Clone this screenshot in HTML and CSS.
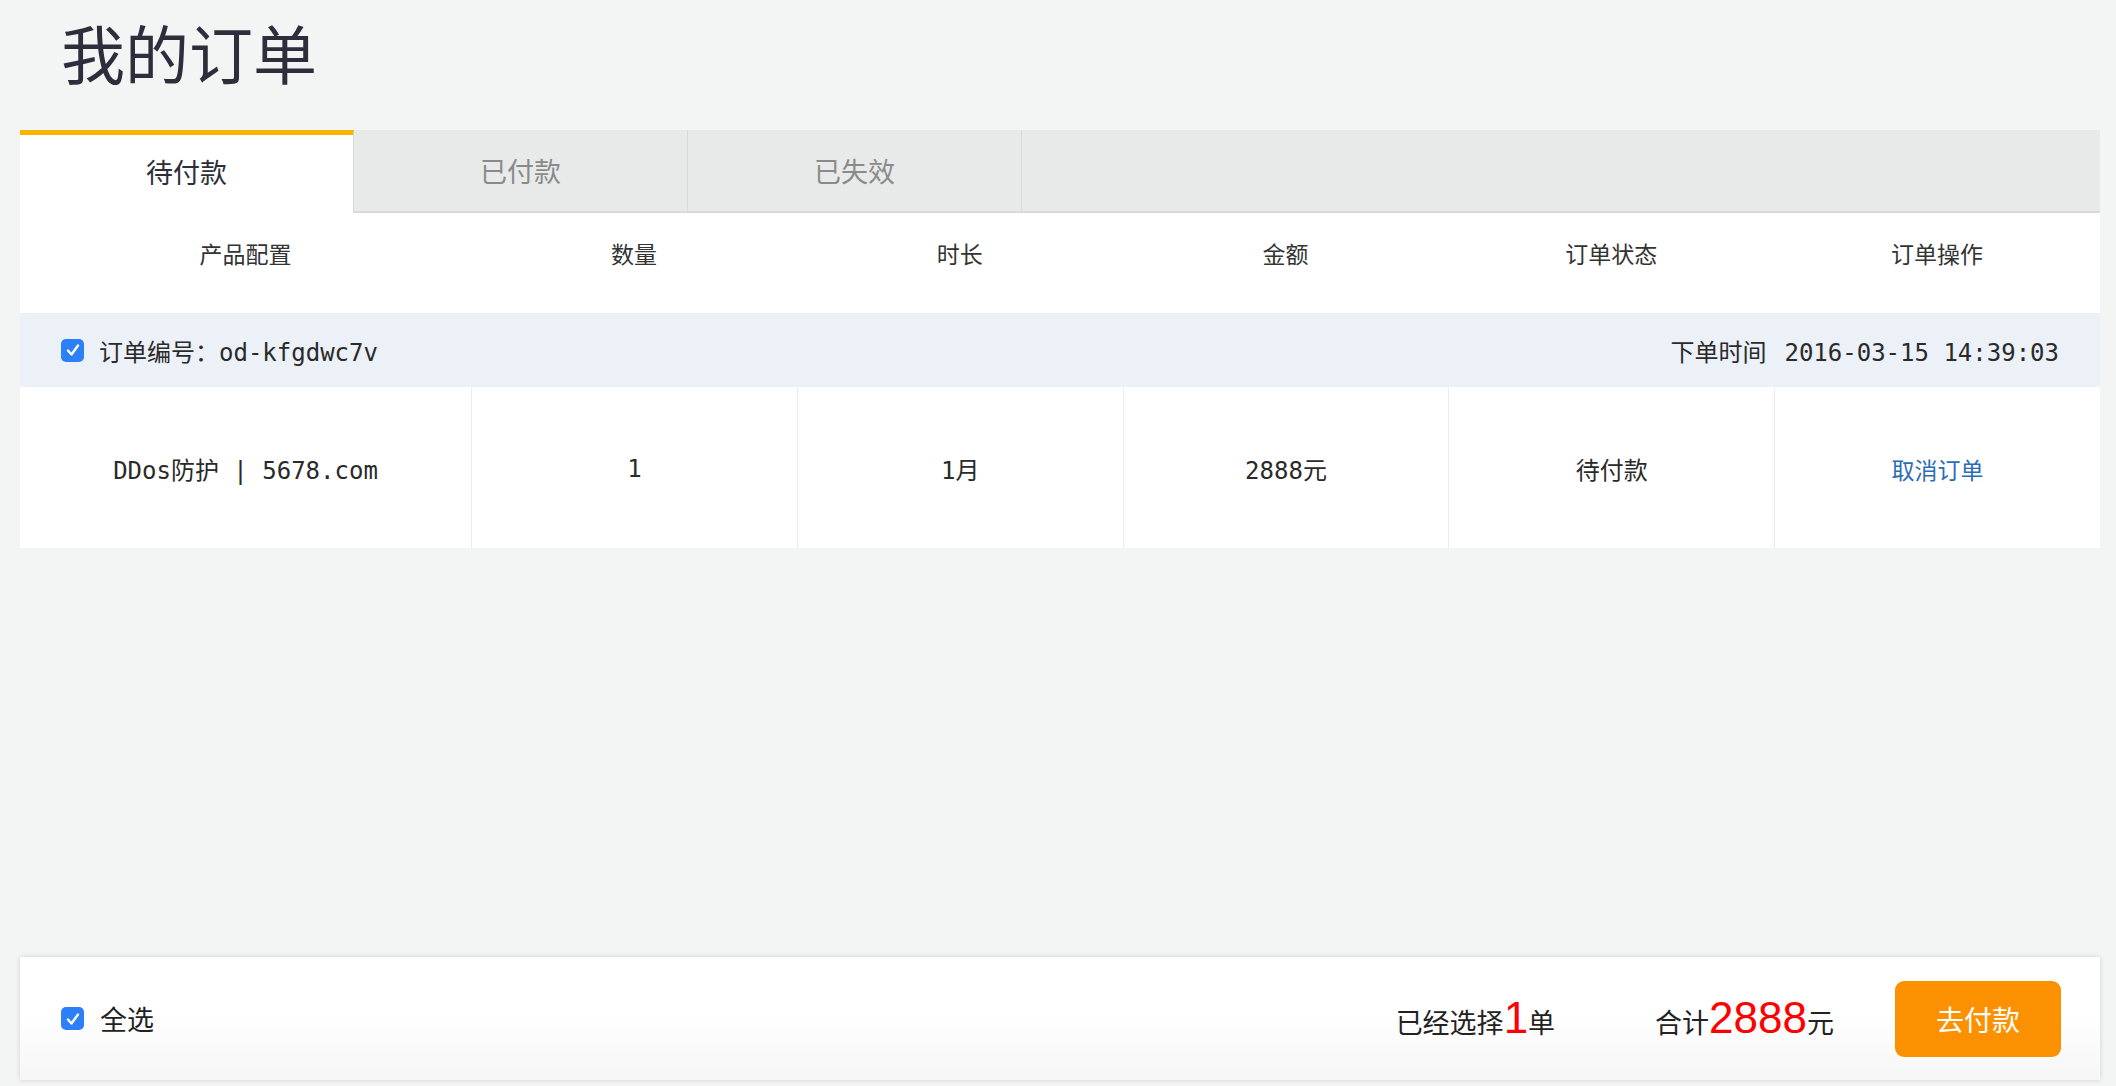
FILE: index.html
```html
<!DOCTYPE html>
<html lang="zh-CN">
<head>
<meta charset="utf-8">
<title>我的订单</title>
<link rel="stylesheet" href="styles.css">
</head>
<body>
<div class="page">
  <h1 class="title">我的订单</h1>

  <div class="tabs">
    <div class="tab active">待付款</div>
    <div class="tab">已付款</div>
    <div class="tab">已失效</div>
    <div class="tab-fill"></div>
  </div>

  <div class="table">
    <div class="thead">
      <div class="th">产品配置</div>
      <div class="th">数量</div>
      <div class="th">时长</div>
      <div class="th">金额</div>
      <div class="th">订单状态</div>
      <div class="th">订单操作</div>
    </div>

    <div class="order-info">
      <div class="order-no">
        <span class="check"><svg viewBox="0 0 22 22" width="22" height="22"><path d="M6 11.5 L9.5 15.5 L16 6.5" fill="none" stroke="#fff" stroke-width="2.4" stroke-linecap="round" stroke-linejoin="round"/></svg></span>
        <span>订单编号：od-kfgdwc7v</span>
      </div>
      <div class="order-time"><span class="label">下单时间</span>2016-03-15 14:39:03</div>
    </div>

    <div class="row">
      <div class="td">DDos防护 | 5678.com</div>
      <div class="td">1</div>
      <div class="td">1月</div>
      <div class="td">2888元</div>
      <div class="td">待付款</div>
      <div class="td"><a class="link" href="#">取消订单</a></div>
    </div>
  </div>

  <div class="footer">
    <div class="select-all">
      <span class="check"><svg viewBox="0 0 22 22" width="22" height="22"><path d="M6 11.5 L9.5 15.5 L16 6.5" fill="none" stroke="#fff" stroke-width="2.4" stroke-linecap="round" stroke-linejoin="round"/></svg></span>
      <span>全选</span>
    </div>
    <div class="summary">
      <div class="count">已经选择<span class="red count-num">1</span>单</div>
      <div class="total">合计<span class="red total-num">2888</span>元</div>
      <button class="pay">去付款</button>
    </div>
  </div>
</div>
</body>
</html>
```

FILE: styles.css
```css
* { box-sizing: border-box; }

html, body {
  margin: 0;
  padding: 0;
}

body {
  background: #f3f5f4;
  color: #333;
  font-family: "Noto Sans CJK SC", "Noto Sans", sans-serif;
}

.page {
  display: flex;
  flex-direction: column;
  min-height: 100vh;
  padding: 0 16px 6px 20px;
}

.title {
  margin: 0;
  padding: 6px 0 0 41px;
  height: 130px;
  font-size: 64px;
  line-height: 90px;
  font-weight: 400;
  color: #2e2d3b;
}

.tabs {
  display: flex;
  height: 83px;
  background: #e8eaea;
}

.tab {
  width: 334px;
  display: flex;
  align-items: center;
  justify-content: center;
  font-size: 27px;
  color: #8a8a8a;
  border-right: 1px solid #d9dbdb;
  border-bottom: 2px solid #d9dbdb;
}

.tab.active {
  background: #fff;
  color: #2e2d3b;
  border-top: 5px solid #f7b500;
  border-bottom: none;
  border-right: 1px solid #d9dbdb;
  padding-bottom: 6px;
}

.tab-fill {
  flex: 1;
  border-bottom: 2px solid #d9dbdb;
}

.table {
  background: #fff;
}

.thead,
.row {
  display: grid;
  grid-template-columns: 451px repeat(5, 1fr);
}

.thead {
  height: 100px;
}

.th {
  text-align: center;
  font-size: 23px;
  line-height: 34px;
  padding-top: 23px;
  color: #333;
}

.order-info {
  height: 74px;
  background: #ecf0f7;
  display: flex;
  align-items: center;
  justify-content: space-between;
  padding: 0 41px;
  font-family: "DejaVu Sans Mono", "Noto Sans CJK SC", monospace;
  font-size: 24px;
  color: #2a2a2a;
}

.order-no {
  display: flex;
  align-items: center;
  gap: 15px;
}

.order-time .label {
  margin-right: 18px;
}

.check {
  width: 23px;
  height: 23px;
  border-radius: 5px;
  background: #2c80f7;
  display: inline-flex;
  align-items: center;
  justify-content: center;
  flex: none;
}

.check svg {
  display: block;
}

.row {
  height: 161px;
}

.td {
  display: flex;
  align-items: center;
  justify-content: center;
  font-family: "DejaVu Sans Mono", "Noto Sans CJK SC", monospace;
  font-size: 24px;
  color: #2a2a2a;
  border-left: 1px solid #ececec;
  padding-top: 2px;
}

.td:first-child {
  border-left: none;
}

.link {
  color: #2a6db4;
  text-decoration: none;
  font-family: "Noto Sans CJK SC", sans-serif;
  font-size: 23px;
}

.footer {
  margin-top: auto;
  height: 123px;
  background: linear-gradient(#ffffff 45%, #f6f6f6);
  box-shadow: 0 0 5px rgba(0, 0, 0, 0.14);
  display: flex;
  align-items: center;
  justify-content: space-between;
  padding: 0 39px 0 41px;
}

.select-all {
  display: flex;
  align-items: center;
  gap: 16px;
  font-size: 27px;
  color: #222;
}

.summary {
  display: flex;
  align-items: center;
}

.count,
.total {
  font-size: 27px;
  color: #222;
  display: flex;
  align-items: baseline;
}

.red {
  color: #ff0000;
  font-family: "Liberation Sans", Arial, sans-serif;
}

.count-num {
  font-size: 44px;
  line-height: 1;
}

.total {
  margin-left: 100px;
}

.total-num {
  font-size: 44px;
  line-height: 1;
}

.pay {
  margin-left: 61px;
  width: 166px;
  height: 76px;
  border: none;
  border-radius: 9px;
  background: #fb9100;
  color: #fff;
  font-family: "Noto Sans CJK SC", sans-serif;
  font-size: 28px;
  cursor: pointer;
}
```
